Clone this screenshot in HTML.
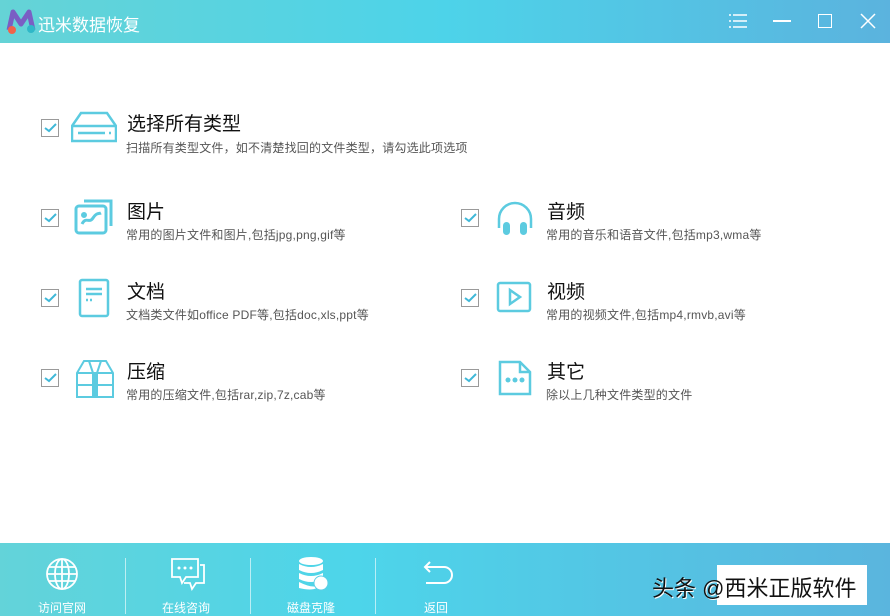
<!DOCTYPE html>
<html><head><meta charset="utf-8"><style>
*{margin:0;padding:0;box-sizing:border-box}
body{width:890px;height:616px;overflow:hidden;background:#fff;font-family:"Liberation Sans","Noto Sans CJK SC",sans-serif;position:relative}
.hd{position:absolute;left:0;top:0;width:890px;height:43px;background:linear-gradient(90deg,#65d3d6 0%,#4dd3e9 50%,#5bb3de 100%)}
.ft{position:absolute;left:0;top:543px;width:890px;height:73px;background:linear-gradient(90deg,#63d3d9 0%,#4dd5ea 40%,#5ab5de 100%)}
.t{position:absolute;color:#fff;font-size:17px;left:38px;top:11px}
.cb{position:absolute;width:18px;height:18px;border:1px solid #9a9a9a;background:#fff}
.cb svg{position:absolute;left:2px;top:3px}
.ti{position:absolute;font-size:19px;color:#111}
.de{position:absolute;font-size:12px;letter-spacing:0.2px;color:#555;white-space:nowrap}
.ic{position:absolute}
.fb{position:absolute;color:#fff;font-size:12px;text-align:center;width:80px}
.sep{position:absolute;top:558px;width:1px;height:56px;background:rgba(255,255,255,.6)}
</style></head><body>
<div class="hd">
<svg style="position:absolute;left:5px;top:8px" width="32" height="28" viewBox="0 0 32 28"><path d="M4 22 L8 4 L16 16 L24 4 L28 22" fill="none" stroke="#7a5fc4" stroke-width="5" stroke-linejoin="round"/><circle cx="7" cy="22" r="4" fill="#f0634a"/><circle cx="26" cy="21" r="4" fill="#2fb8c8"/></svg>
<div class="t">迅米数据恢复</div>
<svg style="position:absolute;left:728px;top:12px" width="20" height="18"><g stroke="#fff" stroke-width="1.5"><line x1="5" y1="3" x2="19" y2="3"/><line x1="5" y1="9" x2="19" y2="9"/><line x1="5" y1="15" x2="19" y2="15"/><line x1="1" y1="3" x2="3" y2="3"/><line x1="1" y1="9" x2="3" y2="9"/><line x1="1" y1="15" x2="3" y2="15"/></g></svg>
<div style="position:absolute;left:773px;top:20px;width:18px;height:2px;background:#fff"></div>
<div style="position:absolute;left:818px;top:14px;width:14px;height:14px;border:1.5px solid #fff"></div>
<svg style="position:absolute;left:860px;top:13px" width="16" height="16"><path d="M1 1L15 15M15 1L1 15" stroke="#fff" stroke-width="1.5"/></svg>
</div>

<div class="cb" style="left:41px;top:119px"><svg width="13" height="10"><path d="M1 5L5 8L12 1" fill="none" stroke="#3fb8d8" stroke-width="2"/></svg></div>
<div class="cb" style="left:41px;top:209px"><svg width="13" height="10"><path d="M1 5L5 8L12 1" fill="none" stroke="#3fb8d8" stroke-width="2"/></svg></div>
<div class="cb" style="left:41px;top:289px"><svg width="13" height="10"><path d="M1 5L5 8L12 1" fill="none" stroke="#3fb8d8" stroke-width="2"/></svg></div>
<div class="cb" style="left:41px;top:369px"><svg width="13" height="10"><path d="M1 5L5 8L12 1" fill="none" stroke="#3fb8d8" stroke-width="2"/></svg></div>
<div class="cb" style="left:461px;top:209px"><svg width="13" height="10"><path d="M1 5L5 8L12 1" fill="none" stroke="#3fb8d8" stroke-width="2"/></svg></div>
<div class="cb" style="left:461px;top:289px"><svg width="13" height="10"><path d="M1 5L5 8L12 1" fill="none" stroke="#3fb8d8" stroke-width="2"/></svg></div>
<div class="cb" style="left:461px;top:369px"><svg width="13" height="10"><path d="M1 5L5 8L12 1" fill="none" stroke="#3fb8d8" stroke-width="2"/></svg></div>

<svg class="ic" style="left:71px;top:111px" width="46" height="32"><g fill="none" stroke="#5ccbe0" stroke-width="2.5"><path d="M10 2H36L45 15V30H1V15Z"/><line x1="1" y1="15" x2="45" y2="15"/><line x1="7" y1="22" x2="34" y2="22"/><line x1="38" y1="22" x2="40" y2="22"/></g></svg>
<svg class="ic" style="left:74px;top:198px" width="42" height="38"><g fill="none" stroke="#5ccbe0" stroke-width="3"><rect x="2" y="8" width="30" height="27" rx="3"/><path d="M10 3H37V28"/><path d="M8 26C12 18 15 26 19 20S25 16 27 15"/><circle cx="10" cy="17" r="1.5"/></g></svg>
<svg class="ic" style="left:78px;top:278px" width="32" height="40"><g fill="none" stroke="#5ccbe0" stroke-width="2.5"><rect x="2" y="2" width="28" height="36" rx="2"/><line x1="8" y1="11" x2="24" y2="11"/><line x1="8" y1="16" x2="24" y2="16"/><line x1="8" y1="22" x2="16" y2="22" stroke-dasharray="2 2"/></g></svg>
<svg class="ic" style="left:75px;top:359px" width="40" height="40"><g fill="none" stroke="#5ccbe0" stroke-width="2"><path d="M9 2H31L38 14V38H2V14Z"/><line x1="2" y1="14" x2="38" y2="14"/><line x1="2" y1="26" x2="38" y2="26"/><path d="M14 2L18 14M26 2L22 14"/></g><rect x="17" y="14" width="6" height="24" fill="#5ccbe0"/></svg>
<svg class="ic" style="left:496px;top:200px" width="38" height="36"><g fill="none" stroke="#5ccbe0" stroke-width="2.5"><path d="M3 28V19A16 16 0 0 1 35 19V28"/></g><rect x="7" y="22" width="7" height="13" rx="3.5" fill="#5ccbe0"/><rect x="24" y="22" width="7" height="13" rx="3.5" fill="#5ccbe0"/></svg>
<svg class="ic" style="left:496px;top:281px" width="36" height="32"><g fill="none" stroke="#5ccbe0" stroke-width="2.5"><rect x="2" y="2" width="32" height="28" rx="2"/><path d="M14 9V23L24 16Z"/></g></svg>
<svg class="ic" style="left:496px;top:360px" width="36" height="36"><g fill="none" stroke="#5ccbe0" stroke-width="2.5"><path d="M4 2H24L34 12V34H4Z"/><path d="M24 2V12H34"/></g><circle cx="12" cy="20" r="2.5" fill="#5ccbe0"/><circle cx="19" cy="20" r="2.5" fill="#5ccbe0"/><circle cx="26" cy="20" r="2.5" fill="#5ccbe0"/></svg>

<div class="ti" style="left:127px;top:109px">选择所有类型</div>
<div class="de" style="left:126px;top:139px">扫描所有类型文件，如不清楚找回的文件类型，请勾选此项选项</div>
<div class="ti" style="left:127px;top:197px">图片</div>
<div class="de" style="left:126px;top:226px">常用的图片文件和图片,包括jpg,png,gif等</div>
<div class="ti" style="left:127px;top:277px">文档</div>
<div class="de" style="left:126px;top:306px">文档类文件如office PDF等,包括doc,xls,ppt等</div>
<div class="ti" style="left:127px;top:357px">压缩</div>
<div class="de" style="left:126px;top:386px">常用的压缩文件,包括rar,zip,7z,cab等</div>
<div class="ti" style="left:547px;top:197px">音频</div>
<div class="de" style="left:546px;top:226px">常用的音乐和语音文件,包括mp3,wma等</div>
<div class="ti" style="left:547px;top:277px">视频</div>
<div class="de" style="left:546px;top:306px">常用的视频文件,包括mp4,rmvb,avi等</div>
<div class="ti" style="left:547px;top:357px">其它</div>
<div class="de" style="left:546px;top:386px">除以上几种文件类型的文件</div>

<div class="ft"></div>
<svg class="ic" style="left:45px;top:557px" width="34" height="34"><g fill="none" stroke="#fff" stroke-width="1.8"><circle cx="17" cy="17" r="15"/><ellipse cx="17" cy="17" rx="7" ry="15"/><line x1="2" y1="17" x2="32" y2="17"/><line x1="4" y1="10" x2="30" y2="10"/><line x1="4" y1="24" x2="30" y2="24"/><line x1="17" y1="2" x2="17" y2="32"/></g></svg>
<svg class="ic" style="left:170px;top:557px" width="36" height="36"><g fill="none" stroke="#fff" stroke-width="1.8"><path d="M2 2H28V20H16L12 26L10 20H2Z"/><path d="M30 8H34V26H26L22 32L20 26H14"/></g><circle cx="9" cy="11" r="1.5" fill="#fff"/><circle cx="15" cy="11" r="1.5" fill="#fff"/><circle cx="21" cy="11" r="1.5" fill="#fff"/></svg>
<svg class="ic" style="left:297px;top:556px" width="32" height="36"><g fill="#fff"><ellipse cx="14" cy="5" rx="12" ry="4"/><path d="M2 8Q14 14 26 8V14Q14 20 2 14Z"/><path d="M2 17Q14 23 26 17V23Q14 29 2 23Z"/><path d="M2 26Q14 32 20 30V32Q14 35 2 32Z"/><circle cx="24" cy="27" r="7" stroke="#5ccfe6" stroke-width="1"/></g></svg>
<svg class="ic" style="left:420px;top:560px" width="34" height="28"><g fill="none" stroke="#fff" stroke-width="2"><path d="M6 7H24A8 8 0 0 1 24 23H6"/><path d="M10 2L5 7L10 12"/></g></svg>
<div class="fb" style="left:22px;top:599px">访问官网</div>
<div class="fb" style="left:146px;top:599px">在线咨询</div>
<div class="fb" style="left:271px;top:599px">磁盘克隆</div>
<div class="fb" style="left:396px;top:599px">返回</div>
<div class="sep" style="left:125px"></div>
<div class="sep" style="left:250px"></div>
<div class="sep" style="left:375px"></div>
<div style="position:absolute;left:717px;top:565px;width:150px;height:40px;background:#fff"></div>
<div style="position:absolute;left:652px;top:571px;font-size:22px;color:#111;white-space:nowrap;text-shadow:1px 1px 0 #fff">头条 @西米正版软件</div>
</body></html>
